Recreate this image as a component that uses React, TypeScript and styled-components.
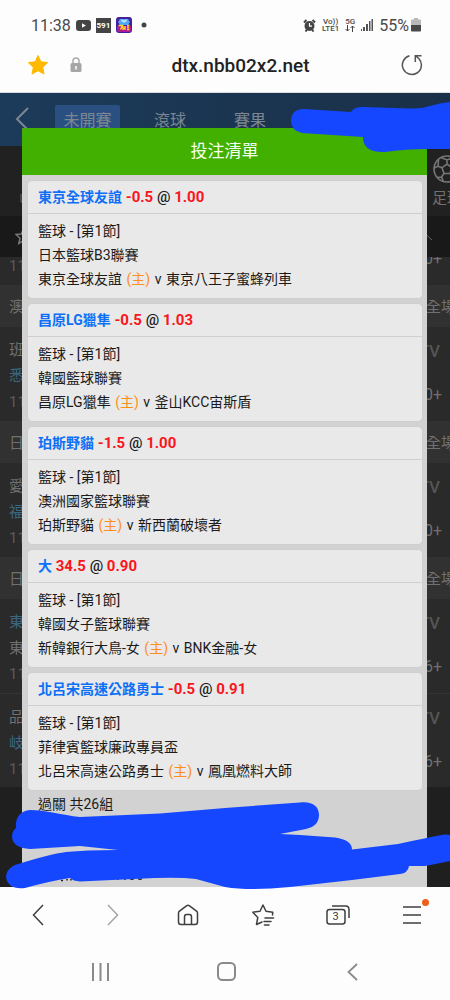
import React from 'react';
import styled, { createGlobalStyle } from 'styled-components';

const GlobalStyle = createGlobalStyle`
  * { box-sizing: border-box; }
  body {
    margin: 0;
    background: #fdfdfd;
    font-family: Roboto, "Noto Sans CJK TC", sans-serif;
  }
  button {
    border: 0;
    padding: 0;
    background: none;
    color: inherit;
    font: inherit;
    display: flex;
    align-items: center;
    justify-content: center;
  }
  svg { display: block; flex: none; }
`;

const Screen = styled.div`
  min-height: 100vh;
  display: flex;
  flex-direction: column;
`;

const StatusBar = styled.header`
  height: 50px;
  padding: 0 29px 0 31px;
  display: flex;
  align-items: center;
  justify-content: space-between;
  color: #4a4a4a;
  font-size: 16px;
`;

const StatusGroup = styled.div<{ $gap: number }>`
  display: flex;
  align-items: center;
  gap: ${(p) => p.$gap}px;
`;

const AppBadge = styled.span`
  width: 15px;
  height: 15px;
  background: #444;
  color: #fff;
  font-size: 8px;
  font-weight: 700;
  line-height: 15px;
  text-align: center;
`;

const NetworkLabel = styled.span`
  display: flex;
  flex-direction: column;
  align-items: center;
  font-size: 8px;
  font-weight: 500;
  line-height: 7px;
`;

const AddressBar = styled.div`
  height: 43px;
  padding: 0 27px 12px;
  display: flex;
  align-items: center;
  border-bottom: 1px solid #d9dde0;
`;

const LockSlot = styled.span`
  margin-left: 21px;
`;

const UrlField = styled.input`
  flex: 1;
  min-width: 0;
  border: 0;
  padding: 0 2px 0 0;
  background: none;
  color: #222;
  font-family: Roboto, sans-serif;
  font-size: 19px;
  font-weight: 500;
  text-align: center;
`;

const Stage = styled.main`
  position: relative;
  flex: 1;
  display: flex;
  flex-direction: column;
`;

const Backing = styled.div`
  flex: 1;
  overflow: hidden;
  display: flex;
  flex-direction: column;
  background: #1f1f1f;
  color: #707070;
  font-size: 15px;
`;

const SiteNav = styled.nav`
  height: 53px;
  padding: 12px 15px 0;
  display: flex;
  align-items: flex-start;
  background: linear-gradient(90deg, #1c3b5a, #1a3048);
  color: #7c8791;
  font-size: 16px;
`;

const NavTab = styled.button<{ $active?: boolean }>`
  height: 28px;
  width: ${(p) => (p.$active ? 65 : 80)}px;
  border-radius: 2px;
  background: ${(p) => (p.$active ? '#2a5082' : 'none')};
`;

const BackSlot = styled.button`
  width: 14px;
  height: 28px;
  margin-right: 26px;
`;

const TabGap = styled.span`
  width: 10px;
`;

const SportStrip = styled.div`
  height: 70px;
  display: flex;
  align-items: flex-start;
  justify-content: space-between;
  padding: 9px 0 0 18px;
  background: #212121;
`;

const SportItem = styled.button`
  flex-direction: column;
  flex: none;
  width: 30px;
  margin-right: -12px;
  line-height: 30px;
`;

const StripMark = styled.svg`
  margin-top: 38px;
`;

const FilterStrip = styled.div`
  height: 41px;
  padding: 0 17px 0 15px;
  display: flex;
  align-items: center;
  justify-content: space-between;
  background: #191919;
`;

const LeagueHeader = styled.div`
  height: 42px;
  flex: none;
  padding: 0 0 2px 9px;
  margin-right: -6px;
  display: flex;
  align-items: center;
  justify-content: space-between;
  background: #313131;
`;

const RowClip = styled.div`
  height: 28px;
  flex: none;
  overflow: hidden;
  display: flex;
  flex-direction: column;
  justify-content: flex-end;
`;

const MatchRow = styled.div`
  height: 94px;
  flex: none;
  padding: 10px 8px 0 9px;
  display: flex;
  justify-content: space-between;
  background: #2a2a2a;
  & + & { border-top: 1px solid #343434; }
`;

const Teams = styled.div`
  line-height: 26px;
`;

const TeamLine = styled.div<{ $tone?: 'blue' | 'dim' }>`
  height: 26px;
  color: ${(p) => (p.$tone === 'blue' ? '#3b6880' : p.$tone === 'dim' ? '#5a5a5a' : '#707070')};
`;

const Extras = styled.div`
  padding-top: 2px;
  display: flex;
  flex-direction: column;
  gap: 20px;
  text-align: right;
  font-size: 16px;
  line-height: 24px;
`;

const LiveMark = styled.div`
  height: 24px;
  padding-right: 2px;
  color: #555;
  font-size: 17px;
  font-weight: 500;
`;

const Slip = styled.section`
  position: absolute;
  inset: 35px 23px 0 22px;
  border-radius: 2px 2px 0 0;
  overflow: hidden;
  background: #d2d2d2;
  color: #1b1b1b;
`;

const SlipTitle = styled.h1`
  margin: 0;
  background: #42b000;
  color: #f4fff0;
  font-size: 17px;
  font-weight: 400;
  line-height: 47px;
  text-align: center;
`;

const BetList = styled.div`
  padding: 6px 5px 0 6px;
  display: flex;
  flex-direction: column;
  gap: 6px;
`;

const Card = styled.article`
  border-radius: 4px;
  background: #e9e9e9;
  box-shadow: 0 0 1px #bbb;
  font-size: 14px;
`;

const CardHead = styled.h2`
  margin: 0;
  height: 33px;
  padding: 0 10px;
  border-bottom: 1px solid #cfcfcf;
  color: #f9151b;
  font-size: 15px;
  font-weight: 700;
  line-height: 32px;
`;

const Pick = styled.span`
  color: #0d70f5;
  font-size: 14px;
`;

const At = styled.span`
  color: #1b1b1b;
  font-weight: 500;
`;

const CardBody = styled.div`
  padding: 5px 10px 7px;
  line-height: 24px;
`;

const Home = styled.span`
  margin: 0 1px;
  color: #ff8f1c;
`;

const Versus = styled.span`
  margin-right: 1px;
`;

const Summary = styled.p`
  margin: 0;
  padding: 2px 16px;
  font-size: 14px;
  line-height: 24px;
`;

const TopScribble = styled.svg`
  position: absolute;
  top: 8px;
  right: 0;
`;

const BottomScribble = styled.svg`
  position: absolute;
  left: 0;
  bottom: -3px;
  width: 100%;
  height: 90px;
`;

const Toolbar = styled.nav`
  height: 56px;
  display: grid;
  grid-template-columns: repeat(6, 1fr);
`;

const SystemNav = styled.nav`
  height: 57px;
  padding: 0 35px 0 38px;
  display: grid;
  grid-template-columns: repeat(3, 1fr);
`;

const TabCount = styled.span`
  position: relative;
  display: flex;
`;

const CountText = styled.span`
  position: absolute;
  left: 0;
  bottom: 0;
  width: 20px;
  color: #3c3c3c;
  font-size: 11px;
  line-height: 17px;
  text-align: center;
`;

type Bet = { pick: string; line: string; odds: string; league: string; home: string; away: string };

const bets: Bet[] = [
  { pick: '東京全球友誼', line: '-0.5', odds: '1.00', league: '日本籃球B3聯賽', home: '東京全球友誼', away: '東京八王子蜜蜂列車' },
  { pick: '昌原LG獵隼', line: '-0.5', odds: '1.03', league: '韓國籃球聯賽', home: '昌原LG獵隼', away: '釜山KCC宙斯盾' },
  { pick: '珀斯野貓', line: '-1.5', odds: '1.00', league: '澳洲國家籃球聯賽', home: '珀斯野貓', away: '新西蘭破壞者' },
  { pick: '大', line: '34.5', odds: '0.90', league: '韓國女子籃球聯賽', home: '新韓銀行大鳥-女', away: 'BNK金融-女' },
  { pick: '北呂宋高速公路勇士', line: '-0.5', odds: '0.91', league: '菲律賓籃球廉政專員盃', home: '北呂宋高速公路勇士', away: '鳳凰燃料大師' },
];

const BetCard = ({ bet }: { bet: Bet }) => (
  <Card>
    <CardHead>
      <Pick>{bet.pick}</Pick> {bet.line} <At>@</At> {bet.odds}
    </CardHead>
    <CardBody>
      <div>籃球 - [第1節]</div>
      <div>{bet.league}</div>
      <div>
        {bet.home} <Home>(主)</Home> <Versus>v</Versus> {bet.away}
      </div>
    </CardBody>
  </Card>
);

type MatchProps = { first?: string; second?: string; blue?: 1 | 2; more: string; live?: boolean };

const Match = ({ first, second, blue, more, live = true }: MatchProps) => (
  <MatchRow>
    <Teams>
      <TeamLine $tone={blue === 1 ? 'blue' : undefined}>{first}</TeamLine>
      <TeamLine $tone={blue === 2 ? 'blue' : undefined}>{second}</TeamLine>
      <TeamLine $tone="dim">11</TeamLine>
    </Teams>
    <Extras>
      <LiveMark>{live && 'TV'}</LiveMark>
      <div>{more}</div>
    </Extras>
  </MatchRow>
);

const League = ({ name }: { name: string }) => (
  <LeagueHeader>
    <span>{name}</span>
    <span>全場</span>
  </LeagueHeader>
);

const YoutubeIcon = () => (
  <svg width="15" height="11" viewBox="0 0 15 11">
    <rect width="15" height="11" rx="3" fill="#444" />
    <path d="M6 3.2v4.6l4-2.3z" fill="#fff" />
  </svg>
);

const GameIcon = () => (
  <svg width="16" height="16" viewBox="0 0 16 16">
    <rect width="16" height="16" rx="3" fill="#43209a" />
    <path d="M1 9h14v4q0 2-2 2H3q-2 0-2-2z" fill="#b01a92" />
    <path d="M2 5l2-3h8l2 3-2 3H4z" fill="#4ea7f5" />
    <path d="M5 4h6M6 2.500l2 3 2-3" stroke="#d6efff" fill="none" />
    <path d="M2.500 8.500h4l-2 4M7 9v3h2V9M11 8.500h2.500M11 10.500h2M11 12.500h2.500" stroke="#ffd52e" strokeWidth="1.500" fill="none" />
  </svg>
);

const AlarmIcon = () => (
  <svg width="13" height="13" viewBox="0 0 13 13">
    <circle cx="6.500" cy="7" r="5" fill="#444" />
    <path d="M1 3.500L3.500 1M12 3.500L9.500 1M2.500 12.500l1.500-2M10.500 12.500L9 10.500" stroke="#444" strokeWidth="2" />
    <path d="M6.500 4v3.200H9" stroke="#fff" strokeWidth="1.200" fill="none" />
  </svg>
);

const SignalIcon = () => (
  <svg width="12" height="12" viewBox="0 0 12 12" fill="#555">
    <rect x="0" y="10" width="1" height="2" />
    <rect x="2" y="8" width="2" height="4" />
    <rect x="5" y="5" width="2" height="7" />
    <rect x="8" y="2" width="1.500" height="10" />
    <rect x="10.500" y="0" width="1.500" height="12" />
  </svg>
);

const BatteryIcon = () => (
  <svg width="10" height="14" viewBox="0 0 10 14">
    <path d="M3 0h4v1.500h2q1 0 1 1V7H0V2.500q0-1 1-1h2z" fill="#b9b9b9" />
    <path d="M0 7h10v5.500q0 1-1 1H1q-1 0-1-1z" fill="#484848" />
  </svg>
);

const SoccerIcon = () => (
  <svg width="28" height="28" viewBox="0 0 28 28" fill="none" stroke="#777" strokeWidth="1.600">
    <circle cx="14" cy="14" r="13" />
    <path d="M14 9l5 3.700-2 5.800h-6l-2-5.800zM14 9V5M19 12.700l4-1.500M17 18.500l2.500 3.500M11 18.500L8.500 22M9 12.700l-4-1.500M8 2.600L14 5l6-2.400M1 13l4-1.800L5.500 4.500M27 13l-4-1.800-.5-6.700M4 22.500l4.500-.5 2 4.600M24 22.500l-4.500-.5-2 4.600" />
  </svg>
);

export default function App() {
  return (
    <Screen>
      <GlobalStyle />
      <StatusBar>
        <StatusGroup $gap={5}>
          <span>11:38</span>
          <YoutubeIcon />
          <AppBadge>591</AppBadge>
          <GameIcon />
          <svg width="16" height="6" viewBox="0 0 16 6">
            <circle cx="7" cy="3" r="2.500" fill="#444" />
          </svg>
        </StatusGroup>
        <StatusGroup $gap={6}>
          <AlarmIcon />
          <NetworkLabel>
            <span>Vo))</span>
            <span>LTE1</span>
          </NetworkLabel>
          <NetworkLabel>
            <span>5G</span>
            <svg width="10" height="7" viewBox="0 0 10 7" fill="none" stroke="#444">
              <path d="M2.500 0v6M.5 4l2 2 2-2M7.500 7V1M5.500 3l2-2 2 2" />
            </svg>
          </NetworkLabel>
          <SignalIcon />
          <StatusGroup $gap={2}>
            <span>55%</span>
            <BatteryIcon />
          </StatusGroup>
        </StatusGroup>
      </StatusBar>

      <AddressBar>
        <button aria-label="Bookmark">
          <svg width="22" height="22" viewBox="0 0 22 22">
            <path d="M11 1.500l2.900 6.300 6.800.8-5 4.700 1.300 6.800-6-3.400-6 3.400 1.300-6.800-5-4.700 6.800-.8z" fill="#ffb900" stroke="#ffb900" strokeLinejoin="round" />
          </svg>
        </button>
        <LockSlot>
          <svg width="12" height="16" viewBox="0 0 12 16">
            <path d="M3 7V4a3 3 0 0 1 6 0v3" fill="none" stroke="#aaa" strokeWidth="1.500" />
            <rect x="0.500" y="6" width="11" height="9" rx="1.500" fill="#a6a6a6" />
            <path d="M6 9v3.500" stroke="#fff" strokeWidth="1.500" />
          </svg>
        </LockSlot>
        <UrlField aria-label="Address" defaultValue="dtx.nbb02x2.net" />
        <button aria-label="Reload">
          <svg width="22" height="22" viewBox="0 0 22 22" fill="none" stroke="#555" strokeWidth="1.500">
            <path d="M8.500 1.800A9.500 9.500 0 1 0 18 4.700L14.500 1.700M20.500 1.700H14.300V8" />
          </svg>
        </button>
      </AddressBar>

      <Stage>
        <Backing>
          <SiteNav>
            <BackSlot aria-label="Back">
              <svg width="14" height="24" viewBox="0 0 14 24" fill="none" stroke="#7c8791" strokeWidth="2">
                <path d="M13 1L2 12l11 11" />
              </svg>
            </BackSlot>
            <NavTab $active>未開賽</NavTab>
            <TabGap />
            <NavTab>滾球</NavTab>
            <NavTab>賽果</NavTab>
          </SiteNav>
          <SportStrip>
            <StripMark width="5" height="10" viewBox="0 0 5 10">
              <path d="M3 1v8h2" fill="none" stroke="#696969" />
            </StripMark>
            <SportItem>
              <SoccerIcon />
              足球
            </SportItem>
          </SportStrip>
          <FilterStrip>
            <svg width="17" height="17" viewBox="0 0 17 17" fill="none" stroke="#777" strokeWidth="1.500">
              <path d="M8.500 1l2.200 5 5.300.5-4 3.700 1.200 5.300-4.700-2.800-4.700 2.800L5 10.200 1 6.500 6.300 6z" />
            </svg>
            <svg width="15" height="8" viewBox="0 0 15 8" fill="none" stroke="#666">
              <path d="M1 7l6.500-6L14 7" />
            </svg>
          </FilterStrip>
          <RowClip>
            <Match more="0+" live={false} />
          </RowClip>
          <League name="澳" />
          <Match first="班" second="悉" blue={2} more="0+" />
          <League name="日" />
          <Match first="愛" second="福" blue={2} more="0+" />
          <League name="日" />
          <Match first="東" second="東" blue={1} more="6+" />
          <Match first="品" second="岐" blue={2} more="6+" />
        </Backing>

        <Slip aria-label="投注清單">
          <SlipTitle>投注清單</SlipTitle>
          <BetList>
            {bets.map((bet) => (
              <BetCard key={bet.pick} bet={bet} />
            ))}
          </BetList>
          <Summary>過關 共26組</Summary>
        </Slip>

        <TopScribble width="160" height="52" viewBox="290 101 160 52" aria-hidden="true">
          <path d="M304 109L351 112Q354 107 362 107L410 108.500Q421 109 430 106Q440 103 450 102V149H427Q405 149 385 152Q363 153 363 137L302 133Q291 131 291 120Q292 109 304 109Z" fill="#1447ff" />
        </TopScribble>
        <BottomScribble viewBox="0 800 450 90" preserveAspectRatio="none" aria-hidden="true">
          <path d="M270 834.500h1M273 835l1-1.500M276 834l1-1.500M61 880.500h2M67 879v1.500M71 879v1.500M117 879h2M124 879h2M130 878.500q2 1.500 4 0M138 878.500q2 1.500 4 0" stroke="#222" strokeWidth="1.500" fill="none" />
          <path d="M30 810C45 810 62 815 80 817L160 813.500L225 808L300 802.500C312 801 319 806 319 815C319 822 315 827 306 829L280 834L300 835L335 837.500Q352 840 352 849.500L398 844Q425 838 439 835.500Q446 834 450 835V861Q436 864 425 866H409Q408 873 400 874L352 880L290 887Q250 891 225 887L196 879Q180 877 155 878L80 881.500Q73 881 70 878Q50 881 25 888Q8 890 6 877Q6 869 15 865Q50 854 66 852Q85 850 118 850L80 846L30 849Q13 848 12 837Q12 831 16 828C15 818 20 811 30 810Z" fill="#1447ff" />
        </BottomScribble>
      </Stage>

      <Toolbar aria-label="Browser">
        <button aria-label="Back">
          <svg width="12" height="22" viewBox="0 0 12 22" fill="none" stroke="#3f3f3f" strokeWidth="1.500">
            <path d="M11 1L1.500 11 11 21" />
          </svg>
        </button>
        <button aria-label="Forward">
          <svg width="12" height="22" viewBox="0 0 12 22" fill="none" stroke="#a5a5a5" strokeWidth="1.500">
            <path d="M1 1l9.500 10L1 21" />
          </svg>
        </button>
        <button aria-label="Home">
          <svg width="22" height="22" viewBox="0 0 22 22" fill="none" stroke="#3f3f3f" strokeWidth="1.500" strokeLinejoin="round">
            <path d="M1.500 9Q1.500 8 2.500 7.200L9.800 1.700Q11 1 12.200 1.700L19.500 7.200Q20.500 8 20.500 9V18Q20.500 20.500 18 20.500H4Q1.500 20.500 1.500 18Z" />
            <path d="M7.500 20.500V13Q7.500 10.500 9.500 10.500H12.500Q14.500 10.500 14.500 13V20.500" />
          </svg>
        </button>
        <button aria-label="Bookmarks">
          <svg width="24" height="22" viewBox="0 0 24 22" fill="none" stroke="#3f3f3f" strokeWidth="1.500" strokeLinejoin="round" strokeLinecap="round">
            <path d="M21.500 11L21.800 8.200 15 7.300 12 1 9 7.300 1.800 8.200 6.800 13.500 5.500 20.500 11 18M14 14h8.500M13 17.500h7M13.500 21h4.500" />
          </svg>
        </button>
        <button aria-label="Tabs">
          <TabCount>
            <svg width="24" height="20" viewBox="0 0 24 20" fill="none" stroke="#3f3f3f" strokeWidth="1.500">
              <rect x="1" y="4.500" width="18" height="14.500" rx="2.500" />
              <path d="M6 1h13.500Q23 1 23 4.500V13" />
            </svg>
            <CountText>3</CountText>
          </TabCount>
        </button>
        <button aria-label="Menu">
          <svg width="33" height="32" viewBox="0 0 33 32" fill="none" stroke="#3f3f3f" strokeWidth="1.500">
            <path d="M7 8h18M7 16h18M7 24h18" />
            <circle cx="29.500" cy="3.500" r="3.500" fill="#ec6019" stroke="none" />
          </svg>
        </button>
      </Toolbar>
      <SystemNav aria-label="System">
        <button aria-label="Recent apps">
          <svg width="17" height="18" viewBox="0 0 17 18" stroke="#8a8a8a" strokeWidth="2">
            <path d="M1 0v18M8.500 0v18M16 0v18" />
          </svg>
        </button>
        <button aria-label="Home screen">
          <svg width="19" height="19" viewBox="0 0 19 19" fill="none" stroke="#8a8a8a" strokeWidth="2">
            <rect x="1" y="1" width="17" height="17" rx="4.500" />
          </svg>
        </button>
        <button aria-label="Go back">
          <svg width="11" height="18" viewBox="0 0 11 18" fill="none" stroke="#8a8a8a" strokeWidth="1.800">
            <path d="M10 1L1.500 9l8.500 8" />
          </svg>
        </button>
      </SystemNav>
    </Screen>
  );
}
